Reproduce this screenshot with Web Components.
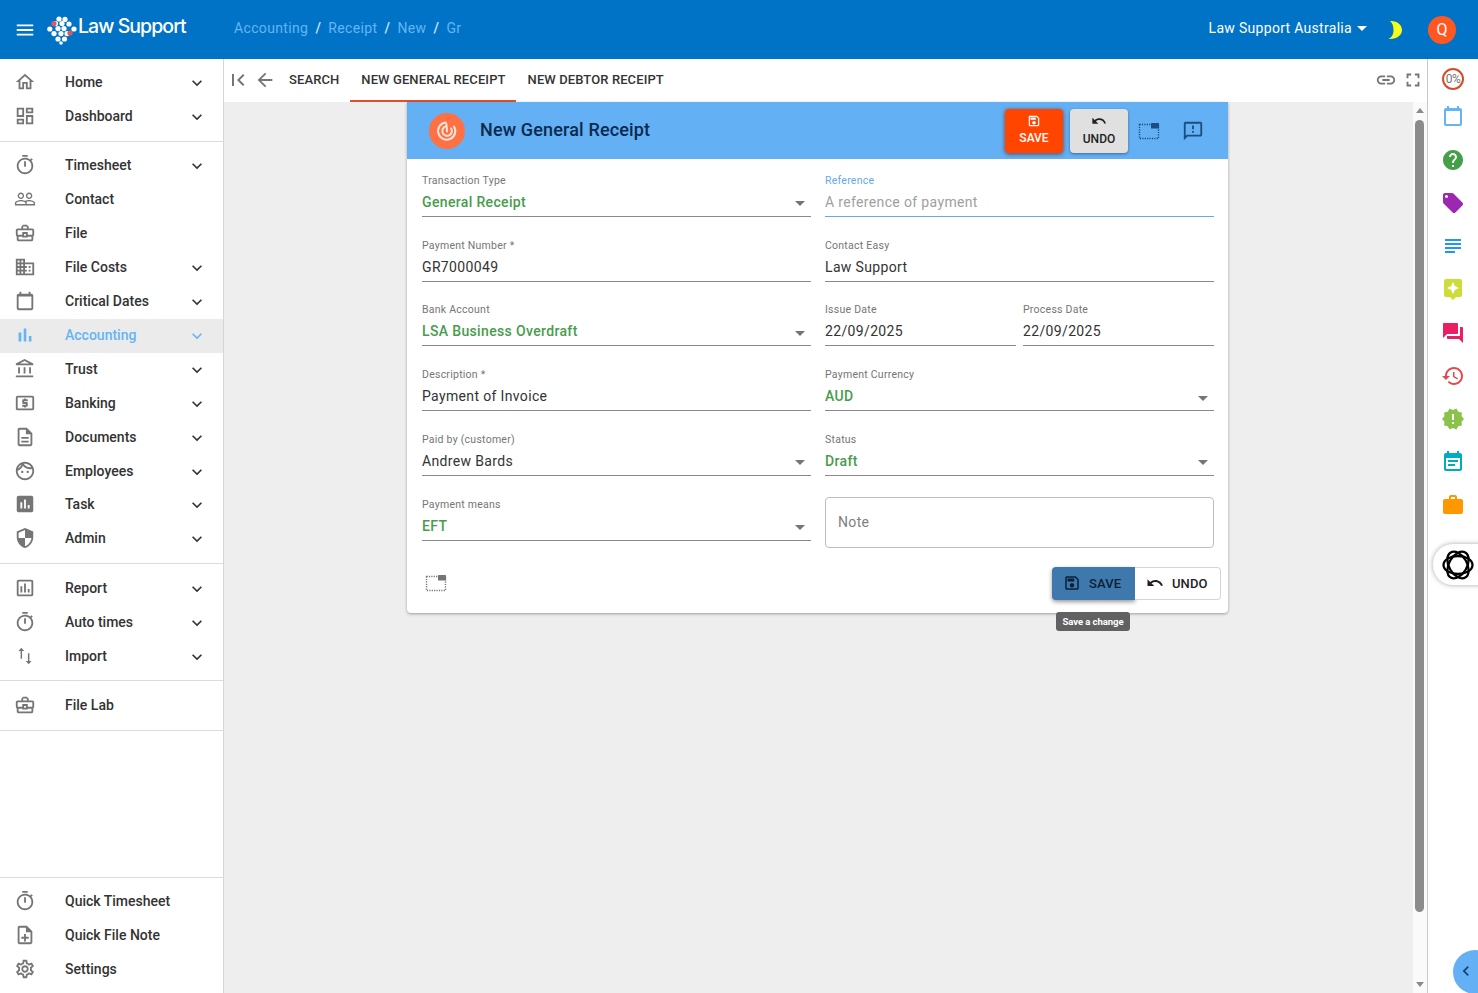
<!DOCTYPE html>
<html lang="en">
<head>
<meta charset="utf-8">
<title>New General Receipt</title>
<style>
  html,body{margin:0;height:100%;overflow:hidden}
  body{font-family:Roboto,"Liberation Sans",sans-serif;background:#fff;color:#333}
  ls-shell{height:100vh}
</style>
</head>
<body>
<ls-shell>
  <ls-header slot="header"></ls-header>
  <ls-sidebar slot="side">
    <ls-nav-group>
      <ls-nav-item icon="home" more>Home</ls-nav-item>
      <ls-nav-item icon="dashboard" more>Dashboard</ls-nav-item>
    </ls-nav-group>
    <ls-nav-group>
      <ls-nav-item icon="timer" more>Timesheet</ls-nav-item>
      <ls-nav-item icon="people">Contact</ls-nav-item>
      <ls-nav-item icon="bag">File</ls-nav-item>
      <ls-nav-item icon="domain" more>File Costs</ls-nav-item>
      <ls-nav-item icon="calendar" more>Critical Dates</ls-nav-item>
      <ls-nav-item icon="bars" more active>Accounting</ls-nav-item>
      <ls-nav-item icon="bank" more>Trust</ls-nav-item>
      <ls-nav-item icon="atm" more>Banking</ls-nav-item>
      <ls-nav-item icon="doc" more>Documents</ls-nav-item>
      <ls-nav-item icon="face" more>Employees</ls-nav-item>
      <ls-nav-item icon="assess" more style="margin-top:-1px">Task</ls-nav-item>
      <ls-nav-item icon="shield" more>Admin</ls-nav-item>
    </ls-nav-group>
    <ls-nav-group loose>
      <ls-nav-item icon="assessout" more>Report</ls-nav-item>
      <ls-nav-item icon="timer" more>Auto times</ls-nav-item>
      <ls-nav-item icon="swap" more>Import</ls-nav-item>
    </ls-nav-group>
    <ls-nav-group loose style="padding-bottom:8px">
      <ls-nav-item icon="bag">File Lab</ls-nav-item>
    </ls-nav-group>
    <div style="flex:1"></div>
    <ls-nav-group foot>
      <ls-nav-item icon="timer">Quick Timesheet</ls-nav-item>
      <ls-nav-item icon="noteadd">Quick File Note</ls-nav-item>
      <ls-nav-item icon="gear">Settings</ls-nav-item>
    </ls-nav-group>
  </ls-sidebar>
  <ls-tabs slot="tabs"></ls-tabs>
  <ls-receipt-card slot="content" title-text="New General Receipt">
    <ls-field label="Transaction Type" select green>General Receipt</ls-field>
    <ls-field label="Reference" focus placeholder>A reference of payment</ls-field>
    <ls-field label="Payment Number *">GR7000049</ls-field>
    <ls-field label="Contact Easy">Law Support</ls-field>
    <ls-field label="Bank Account" select green>LSA Business Overdraft</ls-field>
    <ls-split>
      <ls-field label="Issue Date">22/09/2025</ls-field>
      <ls-field label="Process Date">22/09/2025</ls-field>
    </ls-split>
    <ls-field label="Description *">Payment of Invoice</ls-field>
    <ls-field label="Payment Currency" select green>AUD</ls-field>
    <ls-field label="Paid by (customer)" select>Andrew Bards</ls-field>
    <ls-field label="Status" select green>Draft</ls-field>
    <ls-field label="Payment means" select green>EFT</ls-field>
    <ls-note>Note</ls-note>
  </ls-receipt-card>
  <ls-scrollbar slot="scroll"></ls-scrollbar>
  <ls-rail slot="rail"></ls-rail>
</ls-shell>

<script>
const P={
menu:'M3 18h18v-2H3v2zm0-5h18v-2H3v2zm0-7v2h18V6H3z',
home:'M12 5.69l5 4.5V18h-2v-6H9v6H7v-7.81l5-4.5M12 3L2 12h3v8h6v-6h2v6h6v-8h3L12 3z',
dashboard:'M19 5v2h-4V5h4M9 5v6H5V5h4m10 8v6h-4v-6h4M9 17v2H5v-2h4M21 3h-8v6h8V3zM11 3H3v10h8V3zm10 8h-8v10h8V11zm-10 4H3v6h8v-6z',
timer:'M15 1H9v2h6V1zm-4 13h2V8h-2v6zm8.03-6.61l1.42-1.42c-.43-.51-.9-.99-1.41-1.41l-1.42 1.42C16.07 4.74 14.12 4 12 4c-4.97 0-9 4.03-9 9s4.02 9 9 9 9-4.03 9-9c0-2.12-.74-4.07-1.97-5.61zM12 20c-3.87 0-7-3.13-7-7s3.13-7 7-7 7 3.13 7 7-3.13 7-7 7z',
people:'M16.5 13c-1.2 0-3.07.34-4.5 1-1.43-.67-3.3-1-4.5-1C5.33 13 1 14.08 1 16.25V19h22v-2.75c0-2.17-4.33-3.25-6.5-3.25zm-4 4.5h-10v-1.25c0-.54 2.56-1.75 5-1.75s5 1.21 5 1.75v1.25zm9 0H14v-1.25c0-.46-.2-.86-.52-1.22.88-.3 1.96-.53 3.02-.53 2.44 0 5 1.21 5 1.75v1.25zM7.5 12c1.93 0 3.5-1.57 3.5-3.5S9.43 5 7.5 5 4 6.57 4 8.5 5.57 12 7.5 12zm0-5.5c1.1 0 2 .9 2 2s-.9 2-2 2-2-.9-2-2 .9-2 2-2zm9 5.5c1.93 0 3.5-1.57 3.5-3.5S18.43 5 16.5 5 13 6.57 13 8.5s1.57 3.5 3.5 3.5zm0-5.5c1.1 0 2 .9 2 2s-.9 2-2 2-2-.9-2-2 .9-2 2-2z',
bag:'M20 7h-4V5l-2-2h-4L8 5v2H4c-1.1 0-2 .9-2 2v5c0 .75.4 1.38 1 1.73V19c0 1.11.89 2 2 2h14c1.11 0 2-.89 2-2v-3.28c.59-.35 1-.99 1-1.72V9c0-1.1-.9-2-2-2zM10 5h4v2h-4V5zM4 9h16v5h-5v-3H9v3H4V9zm9 6h-2v-2h2v2zm6 4H5v-3h4v1h6v-1h4v3z',
domain:'M12 7V3H2v18h20V7H12zM6 19H4v-2h2v2zm0-4H4v-2h2v2zm0-4H4V9h2v2zm0-4H4V5h2v2zm4 12H8v-2h2v2zm0-4H8v-2h2v2zm0-4H8V9h2v2zm0-4H8V5h2v2zm10 12h-8v-2h2v-2h-2v-2h2v-2h-2V9h8v10zm-2-8h-2v2h2v-2zm0 4h-2v2h2v-2z',
calendar:'M19 4h-1V2h-2v2H8V2H6v2H5c-1.1 0-2 .9-2 2v14c0 1.1.9 2 2 2h14c1.1 0 2-.9 2-2V6c0-1.1-.9-2-2-2zm0 16H5V7h14v13z',
bars:'M5 9.2h3V19H5zM10.6 5h2.8v14h-2.8zm5.6 8H19v6h-2.8z',
bank:'M6.5 10h-2v7h2v-7zm6 0h-2v7h2v-7zm8.5 9H2v2h19v-2zm-2.5-9h-2v7h2v-7zm-7-6.74L16.71 6H6.29l5.21-2.74m0-2.26L2 6v2h19V6l-9.5-5z',
atm:'M11 17h2v-1h1c.55 0 1-.45 1-1v-3c0-.55-.45-1-1-1h-3v-1h4V8h-2V7h-2v1h-1c-.55 0-1 .45-1 1v3c0 .55.45 1 1 1h3v1H9v2h2v1zm9-13H4c-1.11 0-1.99.89-1.99 2L2 18c0 1.11.89 2 2 2h16c1.11 0 2-.89 2-2V6c0-1.11-.89-2-2-2zm0 14H4V6h16v12z',
doc:'M8 16h8v2H8zm0-4h8v2H8zm6-10H6c-1.1 0-2 .9-2 2v16c0 1.1.89 2 1.99 2H18c1.1 0 2-.9 2-2V8l-6-6zm4 18H6V4h7v5h5v11z',
face:'M10.25 13c0 .69-.56 1.25-1.25 1.25S7.75 13.69 7.75 13s.56-1.25 1.25-1.25 1.25.56 1.25 1.25zM15 11.75c-.69 0-1.25.56-1.25 1.25s.56 1.25 1.25 1.25 1.25-.56 1.25-1.25-.56-1.25-1.25-1.25zm7 .25c0 5.52-4.48 10-10 10S2 17.52 2 12 6.48 2 12 2s10 4.48 10 10zM10.66 4.12C12.06 6.44 14.6 8 17.5 8c.46 0 .91-.05 1.34-.12C17.44 5.56 14.9 4 12 4c-.46 0-.91.05-1.34.12zM4.42 9.47c1.71-.97 3.03-2.55 3.66-4.44C6.37 6 5.05 7.58 4.42 9.47zM20 12c0-.78-.12-1.53-.33-2.24-.7.15-1.42.24-2.17.24-3.13 0-5.92-1.44-7.76-3.69C8.69 8.87 6.6 10.88 4 11.86c.01.04 0 .09 0 .14 0 4.41 3.59 8 8 8s8-3.59 8-8z',
assess:'M19 3H5c-1.1 0-2 .9-2 2v14c0 1.1.9 2 2 2h14c1.1 0 2-.9 2-2V5c0-1.1-.9-2-2-2zM9 17H7v-7h2v7zm4 0h-2V7h2v10zm4 0h-2v-4h2v4z',
assessout:'M19 3H5c-1.1 0-2 .9-2 2v14c0 1.1.9 2 2 2h14c1.1 0 2-.9 2-2V5c0-1.1-.9-2-2-2zm0 16H5V5h14v14zM7 10h2v7H7zm4-3h2v10h-2zm4 6h2v4h-2z',
shield:'M12 1L3 5v6c0 5.55 3.84 10.74 9 12 5.16-1.26 9-6.45 9-12V5l-9-4zm0 10.99h7c-.53 4.12-3.28 7.79-7 8.94V12H5V6.3l7-3.11v8.8z',
swap:'M8 3L4.8 6.6h2.4V15h1.6V6.6h2.4L8 3zm8 18l3.2-3.6h-2.4V9h-1.6v8.4h-2.4L16 21z',
noteadd:'M14 2H6c-1.1 0-1.99.9-1.99 2L4 20c0 1.1.89 2 1.99 2H18c1.1 0 2-.9 2-2V8l-6-6zm4 18H6V4h7v5h5v11zM13 11h-2v3H8v2h3v3h2v-3h3v-2h-3z',
gear:'M19.43 12.98c.04-.32.07-.64.07-.98 0-.34-.03-.66-.07-.98l2.11-1.65c.19-.15.24-.42.12-.64l-2-3.46c-.09-.16-.26-.25-.44-.25-.06 0-.12.01-.17.03l-2.49 1c-.52-.4-1.08-.73-1.69-.98l-.38-2.65C14.46 2.18 14.25 2 14 2h-4c-.25 0-.46.18-.49.42l-.38 2.65c-.61.25-1.17.59-1.69.98l-2.49-1c-.06-.02-.12-.03-.18-.03-.17 0-.34.09-.43.25l-2 3.46c-.13.22-.07.49.12.64l2.11 1.65c-.04.32-.07.65-.07.98 0 .33.03.66.07.98l-2.11 1.65c-.19.15-.24.42-.12.64l2 3.46c.09.16.26.25.44.25.06 0 .12-.01.17-.03l2.49-1c.52.4 1.08.73 1.69.98l.38 2.65c.03.24.24.42.49.42h4c.25 0 .46-.18.49-.42l.38-2.65c.61-.25 1.17-.59 1.69-.98l2.49 1c.06.02.12.03.18.03.17 0 .34-.09.43-.25l2-3.46c.12-.22.07-.49-.12-.64l-2.11-1.65zm-1.98-1.71c.04.31.05.52.05.73 0 .21-.02.43-.05.73l-.14 1.13.89.7 1.08.84-.7 1.21-1.27-.51-1.04-.42-.9.68c-.43.32-.84.56-1.25.73l-1.06.43-.16 1.13-.2 1.35h-1.4l-.19-1.35-.16-1.13-1.06-.43c-.43-.18-.83-.41-1.23-.71l-.91-.7-1.06.43-1.27.51-.7-1.21 1.08-.84.89-.7-.14-1.13c-.03-.31-.05-.54-.05-.74s.02-.43.05-.73l.14-1.13-.89-.7-1.08-.84.7-1.21 1.27.51 1.04.42.9-.68c.43-.32.84-.56 1.25-.73l1.06-.43.16-1.13.2-1.35h1.39l.19 1.35.16 1.13 1.06.43c.43.18.83.41 1.23.71l.91.7 1.06-.43 1.27-.51.7 1.21-1.07.85-.89.7.14 1.13zM12 8c-2.21 0-4 1.79-4 4s1.79 4 4 4 4-1.79 4-4-1.79-4-4-4zm0 6c-1.1 0-2-.9-2-2s.9-2 2-2 2 .9 2 2-.9 2-2 2z',
chev:'M16.59 8.59L12 13.17 7.41 8.59 6 10l6 6 6-6z',
first:'M18.41 16.59L13.82 12l4.59-4.59L17 6l-6 6 6 6zM6 6h2v12H6z',
back:'M20 11H7.83l5.59-5.59L12 4l-8 8 8 8 1.41-1.41L7.83 13H20v-2z',
link:'M3.9 12c0-1.71 1.39-3.1 3.1-3.1h4V7H7c-2.76 0-5 2.24-5 5s2.24 5 5 5h4v-1.9H7c-1.71 0-3.1-1.39-3.1-3.1zM8 13h8v-2H8v2zm9-6h-4v1.9h4c1.71 0 3.1 1.39 3.1 3.1s-1.39 3.1-3.1 3.1h-4V17h4c2.76 0 5-2.24 5-5s-2.24-5-5-5z',
full:'M7 14H5v5h5v-2H7v-3zm-2-4h2V7h3V5H5v5zm12 7h-3v2h5v-5h-2v3zM14 5v2h3v3h2V5h-5z',
save:'M17 3H5c-1.11 0-2 .9-2 2v14c0 1.1.89 2 2 2h14c1.1 0 2-.9 2-2V7l-4-4zm2 16H5V5h11.17L19 7.83V19zm-7-7c-1.66 0-3 1.34-3 3s1.34 3 3 3 3-1.34 3-3-1.34-3-3-3zM6 6h9v4H6z',
undo:'M12.5 8c-2.65 0-5.05.99-6.9 2.6L2 7v9h9l-3.62-3.62c1.39-1.16 3.16-1.88 5.12-1.88 3.54 0 6.55 2.31 7.6 5.5l2.37-.78C21.08 11.03 17.15 8 12.5 8z',
announce:'M20 2H4c-1.1 0-1.99.9-1.99 2L2 22l4-4h14c1.1 0 2-.9 2-2V4c0-1.1-.9-2-2-2zm0 14H5.17L4 17.17V4h16v12zM11 12h2v2h-2zm0-6h2v4h-2z',
help:'M12 2C6.48 2 2 6.48 2 12s4.48 10 10 10 10-4.48 10-10S17.52 2 12 2zm1 17h-2v-2h2v2zm2.07-7.75l-.9.92C13.45 12.9 13 13.5 13 15h-2v-.5c0-1.1.45-2.1 1.17-2.83l1.24-1.26c.37-.36.59-.86.59-1.41 0-1.1-.9-2-2-2s-2 .9-2 2H8c0-2.21 1.79-4 4-4s4 1.79 4 4c0 .88-.36 1.68-.93 2.25z',
tag:'M21.41 11.58l-9-9C12.05 2.22 11.55 2 11 2H4c-1.1 0-2 .9-2 2v7c0 .55.22 1.05.59 1.42l9 9c.36.36.86.58 1.41.58.55 0 1.05-.22 1.41-.59l7-7c.37-.36.59-.86.59-1.41 0-.55-.23-1.06-.59-1.42zM5.5 7C4.67 7 4 6.33 4 5.5S4.67 4 5.5 4 7 4.67 7 5.5 6.33 7 5.5 7z',
subject:'M14 17H4v2h10v-2zm6-8H4v2h16V9zM4 15h16v-2H4v2zM4 5v2h16V5H4z',
star:'M19 2H5c-1.1 0-2 .9-2 2v14c0 1.1.9 2 2 2h4l3 3 3-3h4c1.1 0 2-.9 2-2V4c0-1.1-.9-2-2-2zm-5.12 10.88L12 17l-1.88-4.12L6 11l4.12-1.88L12 5l1.88 4.12L18 11l-4.12 1.88z',
forum:'M21 6h-2v9H6v2c0 .55.45 1 1 1h11l4 4V7c0-.55-.45-1-1-1zm-4 6V3c0-.55-.45-1-1-1H3c-.55 0-1 .45-1 1v14l4-4h10c.55 0 1-.45 1-1z',
history:'M13 3c-4.97 0-9 4.03-9 9H1l3.89 3.89.07.14L9 12H6c0-3.87 3.13-7 7-7s7 3.13 7 7-3.13 7-7 7c-1.93 0-3.68-.79-4.94-2.06l-1.42 1.42C8.27 19.99 10.51 21 13 21c4.97 0 9-4.03 9-9s-4.03-9-9-9zm-1 5v5l4.28 2.54.72-1.21-3.5-2.08V8H12z',
release:'M23 12l-2.44-2.78.34-3.68-3.61-.82-1.89-3.18L12 3 8.6 1.54 6.71 4.72l-3.61.81.34 3.68L1 12l2.44 2.78-.34 3.69 3.61.82 1.89 3.18L12 21l3.4 1.46 1.89-3.18 3.61-.82-.34-3.68L23 12zm-10 5h-2v-2h2v2zm0-4h-2V7h2v6z',
event:'M17 10H7v2h10v-2zm2-7h-1V1h-2v2H8V1H6v2H5c-1.11 0-1.99.9-1.99 2L3 19c0 1.1.89 2 2 2h14c1.1 0 2-.9 2-2V5c0-1.1-.9-2-2-2zm0 16H5V8h14v11zm-5-5H7v2h7v-2z',
work:'M20 6h-4V4c0-1.11-.89-2-2-2h-4c-1.11 0-2 .89-2 2v2H4c-1.11 0-1.99.89-1.99 2L2 19c0 1.11.89 2 2 2h16c1.11 0 2-.89 2-2V8c0-1.11-.89-2-2-2zm-6 0h-4V4h4v2z',
left:'M15.41 7.41L14 6l-6 6 6 6 1.41-1.41L10.83 12z',
moon:'M7 3C14 2.5 19 7 19 12S14 21.5 5.5 21C9 19.5 10.5 16 10.5 12S9.5 5 7 3z'
};
const def=(n,html)=>{
  customElements.define(n,class extends HTMLElement{
    constructor(){super();this.attachShadow({mode:'open'});if(typeof html!=='function')this.shadowRoot.innerHTML=html;}
    connectedCallback(){if(typeof html==='function'&&!this._r){this._r=1;this.shadowRoot.innerHTML=html(this);}}
  });
};
def('ls-icon',el=>{
  const n=el.getAttribute('name')||'menu',s=el.getAttribute('size')||24;
  return `<style>:host{display:inline-flex;flex:none;width:${s}px;height:${s}px}svg{display:block;width:100%;height:100%;fill:currentColor}</style><svg viewBox="0 0 24 24" aria-hidden="true"><path d="${P[n]||''}"/></svg>`;
});
def('ls-pip',el=>{
  const s=el.getAttribute('size')||24;
  return `<style>:host{display:inline-flex;flex:none;width:${s}px;height:${s}px}svg{display:block;width:100%;height:100%}</style>
  <svg viewBox="0 0 24 24" aria-hidden="true"><rect x="2.5" y="5.5" width="19" height="14" fill="none" stroke="currentColor" stroke-width="1.4" stroke-dasharray="1.2 1.2"/><rect x="14" y="4" width="8" height="5.5" rx=".5" fill="currentColor"/></svg>`;
});

def('ls-shell',`<style>
:host{display:grid;grid-template-columns:224px 1fr 14px 51px;grid-template-rows:59px 43px 1fr;position:relative;overflow:hidden;background:#fff}
.h{grid-column:1/-1;grid-row:1}.s{grid-column:1;grid-row:2/4;display:flex;min-height:0}
.t{grid-column:2/4;grid-row:2;min-width:0}.c{grid-column:2;grid-row:3;min-height:0;min-width:0;background:#eee}
.b{grid-column:3;grid-row:3;min-height:0}.r{grid-column:4;grid-row:2/4;min-height:0}
</style>
<div class="h"><slot name="header"></slot></div>
<div class="s"><slot name="side"></slot></div>
<div class="t"><slot name="tabs"></slot></div>
<div class="c"><slot name="content"></slot></div>
<div class="b"><slot name="scroll"></slot></div>
<div class="r"><slot name="rail"></slot></div>`);

def('ls-header',`<style>
:host{display:flex;align-items:center;height:59px;background:#0073c6;color:#fff;font:400 14px Roboto,sans-serif;box-sizing:border-box}
.burger{margin-left:14px;margin-top:1px}
.logo{display:flex;align-items:center;margin-left:11px;width:30px;height:30px;margin-top:1px}
.brand{font:500 19.5px Inter,"Open Sans",sans-serif;letter-spacing:-.95px;margin-left:1px;margin-top:-7px;width:108px;white-space:nowrap}
.crumbs{display:flex;margin-left:48px;margin-top:-3px;color:#64b5f6;letter-spacing:.35px;line-height:20px}
.crumbs i{font-style:normal;color:#cfe6fa;margin:0 7.1px;font-weight:500}
.sp{flex:1}
.org{display:flex;align-items:center;margin-top:-3px;letter-spacing:.3px}
.caret{width:0;height:0;border:5px solid transparent;border-top-color:#fff;border-bottom:0;margin-left:5px;margin-top:1px}
.moon{color:#f5ff1a;margin:0 21px 0 16px}
.av{width:28px;height:28px;border-radius:50%;background:#ff5722;display:flex;align-items:center;justify-content:center;font-size:16px;margin-right:22px;color:#fff}
</style>
<ls-icon class="burger" name="menu" size="22"></ls-icon>
<svg class="logo" viewBox="0 0 30 30" aria-hidden="true"><g fill="#fff"><circle cx="12" cy="4" r="2.6"/><circle cx="18" cy="4.4" r="2.6"/><circle cx="8.5" cy="8.6" r="2.6"/><circle cx="15" cy="8.6" r="2.6"/><circle cx="22" cy="9" r="2.6"/><circle cx="2.8" cy="14" r="2.6"/><circle cx="11" cy="13.6" r="2.6"/><circle cx="17" cy="13.6" r="2.6"/><circle cx="27" cy="14" r="2.6"/><circle cx="7" cy="18.6" r="2.6"/><circle cx="14" cy="18.6" r="2.6"/><circle cx="20" cy="18.6" r="2.6"/><circle cx="11" cy="24" r="2.6"/><circle cx="17.5" cy="24" r="2.6"/><circle cx="14" cy="28" r="1.8"/></g><circle cx="7" cy="8.6" r="2.6" fill="#d95a67"/><circle cx="23" cy="18" r="2.6" fill="#d95a67"/></svg>
<div class="brand">Law Support</div>
<div class="crumbs"><span>Accounting</span><i>/</i><span>Receipt</span><i>/</i><span>New</span><i>/</i><span>Gr</span></div>
<div class="sp"></div>
<div class="org"><span>Law Support Australia</span><span class="caret"></span></div>
<ls-icon class="moon" name="moon"></ls-icon>
<div class="av">Q</div>`);

def('ls-sidebar',`<style>
:host{display:flex;flex-direction:column;width:224px;box-sizing:border-box;border-right:1px solid #d6d6d6;background:#fff;height:100%}
</style><slot></slot>`);

def('ls-nav-group',`<style>
:host{display:block;padding:6px 0 8px;border-bottom:1px solid #dcdcdc}
:host([loose]){padding:7px 0}
:host([foot]){border-bottom:0;border-top:1px solid #dcdcdc;padding:6px 0 7px}
</style><slot></slot>`);

def('ls-nav-item',el=>{
  const more=el.hasAttribute('more'),a=el.hasAttribute('active');
  return `<style>
:host{display:flex;align-items:center;height:34px;font:500 14px/20px Roboto,sans-serif;color:${a?'#64b5f6':'#333'};${a?'background:linear-gradient(transparent 1px,#ebebeb 1px);box-shadow:0 1px #ebebeb;position:relative;':''}}
.i{margin-left:14px;color:${a?'#64b5f6':'#757575'}}
.t{margin-left:29px;flex:1;white-space:nowrap}
.c{margin-right:16px;margin-top:1px;color:${a?'#64b5f6':'#333'}}
</style><ls-icon class="i" name="${el.getAttribute('icon')}" size="22"></ls-icon><span class="t"><slot></slot></span>${more?'<ls-icon class="c" name="chev" size="20"></ls-icon>':''}`;
});

def('ls-tabs',`<style>
:host{display:flex;align-items:center;height:43px;background:#fff;font:500 13px Roboto,sans-serif;color:#333;box-sizing:border-box}
.g{color:#757575;margin-bottom:2px}
.a{margin-left:2px}.b{margin-left:4px}
.tab{display:flex;align-items:center;height:43px;box-sizing:border-box;padding:0 11px;letter-spacing:.1px;white-space:nowrap;border-bottom:2px solid transparent}
.tab.on{border-bottom-color:#e2502b;padding-right:10px}
.tab.on + .tab{padding-left:12px}
.first{margin-left:2px}
.sp{flex:1}
.end{display:flex;align-items:center;gap:6px;margin:0 3px 2px 0;color:#757575}
.end ls-icon:first-child{margin-right:-1px}
</style>
<ls-icon class="g a" name="first" size="24"></ls-icon>
<ls-icon class="g b" name="back" size="22"></ls-icon>
<div class="tab first">SEARCH</div>
<div class="tab on">NEW GENERAL RECEIPT</div>
<div class="tab">NEW DEBTOR RECEIPT</div>
<div class="sp"></div>
<div class="end"><ls-icon name="link" size="22"></ls-icon><ls-icon name="full" size="22"></ls-icon></div>`);

def('ls-receipt-card',el=>`<style>
:host{display:block;width:821px;margin:0 auto;position:relative;left:-1px;background:#fff;border-radius:0 0 4px 4px;box-shadow:0 1px 3px rgba(0,0,0,.35);font-family:Roboto,sans-serif}
.bar{display:flex;align-items:center;height:57px;background:#64b0f5;color:#0b2a4e;box-sizing:border-box}
.badge{width:36px;height:36px;margin-left:22px;display:block}
h1{font:500 18px Roboto,sans-serif;margin:-2px 0 0 15px;flex:1;letter-spacing:.15px;color:#0b2a4e}
.tb{display:flex;flex-direction:column;align-items:center;justify-content:center;width:58px;height:44px;box-sizing:border-box;padding-bottom:3px;border-radius:4px;font:500 12px/14px Roboto,sans-serif;margin-right:7px;box-shadow:0 1px 3px rgba(0,0,0,.4);gap:3px}
.tb.s{background:#ff4500;color:#fff;box-shadow:0 1px 4px rgba(90,20,0,.7)}.tb.u{background:#e0e0e0;color:#222}
.ic{color:#1a4d80;display:flex}
.ic.one{margin-left:2px}.ic.two{margin-left:21px;margin-right:24px}
.form{display:grid;grid-template-columns:389px 389px;column-gap:14px;row-gap:20.8px;padding:14.8px 14px 0 15px;grid-auto-rows:44px}
.foot{display:flex;align-items:center;padding:12px 7px 13px 17px;margin-top:13.2px;height:33px;box-sizing:content-box;position:relative}
.foot .sp{flex:1}
.pipf{color:#757575;display:flex}
button{font:500 13px Roboto,sans-serif;letter-spacing:.1px;height:33px;border:0;display:flex;align-items:center;box-sizing:border-box;padding:0;cursor:pointer;gap:8px}
.save{width:83px;padding-left:11px;background:#3f78ac;color:#0b2036;border-radius:4px 0 0 4px;box-shadow:0 2px 4px rgba(0,0,0,.4)}
.undo{width:86px;padding-left:11px;background:#fff;color:#222;border:1px solid #d5d5d5;border-left:0;border-radius:0 4px 4px 0}
.tip{position:absolute;left:649px;top:57px;height:19px;width:74px;background:#616161;color:#fff;border-radius:3px;font:700 9.6px/19px Roboto,sans-serif;text-align:center;white-space:nowrap;letter-spacing:-.1px}
</style>
<div class="bar">
<svg class="badge" viewBox="0 0 36 36" aria-hidden="true"><circle cx="18" cy="18" r="18" fill="#ff7043"/><g fill="none" stroke="#ffe6dc" stroke-linecap="round" stroke-width="2"><path d="M25 13.5a8.6 8.6 0 1 1-8.4-4"/><path d="M22.2 15.5a4.8 4.8 0 1 1-5-2.2"/><path d="M18 18.5l-.6-7.5"/></g></svg>
<h1>${el.getAttribute('title-text')||''}</h1>
<div class="tb s"><ls-icon name="save" size="14"></ls-icon><span>SAVE</span></div>
<div class="tb u"><ls-icon name="undo" size="16"></ls-icon><span>UNDO</span></div>
<span class="ic one"><ls-pip size="24"></ls-pip></span>
<span class="ic two"><ls-icon name="announce" size="22"></ls-icon></span>
</div>
<div class="form"><slot></slot></div>
<div class="foot"><span class="pipf"><ls-pip size="24"></ls-pip></span><span class="sp"></span>
<button class="save"><ls-icon name="save" size="18"></ls-icon>SAVE</button><button class="undo"><ls-icon name="undo" size="18"></ls-icon>UNDO</button>
<div class="tip">Save a change</div></div>`);

def('ls-field',el=>{
  const sel=el.hasAttribute('select'),g=el.hasAttribute('green'),f=el.hasAttribute('focus'),ph=el.hasAttribute('placeholder');
  return `<style>
:host{display:flex;flex-direction:column;min-width:0;height:44px;box-sizing:border-box;font-family:Roboto,sans-serif}
label{font:400 10.5px/14px Roboto,sans-serif;color:${f?'#64a9e8':'#757575'};letter-spacing:.25px;white-space:nowrap}
.box{display:flex;align-items:center;height:24px;margin-top:4px;border-bottom:1px solid ${f?'#64a9e8':'#8a8a8a'}}
.v{flex:1;font:${g?500:400} 14px/20px Roboto,sans-serif;letter-spacing:.35px;color:${ph?'#a0a0a0':g?'#479c4c':'#333'};white-space:nowrap;padding-bottom:4px}
.a{width:0;height:0;border:5px solid transparent;border-top-color:#757575;border-bottom:0;margin-right:6px}
</style><label>${el.getAttribute('label')}</label><div class="box"><span class="v"><slot></slot></span>${sel?'<span class="a"></span>':''}</div>`;
});
def('ls-split',`<style>:host{display:grid;grid-template-columns:191px 191px;column-gap:7px}</style><slot></slot>`);
def('ls-note',`<style>:host{display:flex;align-items:center;box-sizing:border-box;height:51px;margin-top:-.8px;border:1px solid #bdbdbd;border-radius:4px;padding:0 12px;font:400 14px/20px Roboto,sans-serif;color:#808080;letter-spacing:.35px;background:#fff}</style><span><slot></slot></span>`);

def('ls-scrollbar',`<style>
:host{display:flex;flex-direction:column;align-items:center;height:100%;width:14px;background:#fafafa;box-sizing:border-box;padding-right:1px}
.u,.d{width:0;height:0;border:4.5px solid transparent;flex:none}
.u{border-bottom:5px solid #8a8a8a;border-top:0;margin-top:6px}
.t{width:9px;height:792px;background:#8b8b8b;border-radius:5px;margin-top:7px;flex:none}
.sp{flex:1}
.d{border-top:5px solid #8a8a8a;border-bottom:0;margin-bottom:6px}
</style><div class="u"></div><div class="t"></div><div class="sp"></div><div class="d"></div>`);

def('ls-rail',`<style>
:host{display:block;position:relative;height:100%;border-left:1px solid #c9c9c9;background:#fff;box-sizing:border-box;width:51px;padding-top:9px}
.pct{width:18px;height:18px;border:2px solid #d8492c;border-radius:50%;margin:0 0 5px 14px;font:400 12px/18px Roboto,sans-serif;color:#757575;text-align:center;letter-spacing:-.4px;white-space:nowrap}
.col{display:flex;flex-direction:column;align-items:center;width:50px}
.it{display:flex;align-items:center;justify-content:center;height:43.2px;width:50px}
.pill{position:absolute;left:5px;top:485px;width:60px;height:41px;border-radius:20px 0 0 20px;background:#fff;box-shadow:0 0 5px rgba(0,0,0,.35);display:flex;align-items:center;padding-left:9px;box-sizing:border-box}
.fab{position:absolute;left:25px;top:891px;width:44px;height:44px;border-radius:50%;background:#64b0f5;color:#123f6d}
.fab ls-icon{position:absolute;left:3px;top:11px}
</style>
<div class="pct">0%</div>
<div class="col">
<div class="it" style="color:#64b5f6"><ls-icon name="calendar" style="margin-top:-1px"></ls-icon></div>
<div class="it" style="color:#43a047"><ls-icon name="help"></ls-icon></div>
<div class="it" style="color:#9c27b0"><ls-icon name="tag"></ls-icon></div>
<div class="it" style="color:#2196f3"><ls-icon name="subject"></ls-icon></div>
<div class="it" style="color:#cddc39"><ls-icon name="star"></ls-icon></div>
<div class="it" style="color:#e91e63"><ls-icon name="forum"></ls-icon></div>
<div class="it" style="color:#e5484f"><ls-icon name="history"></ls-icon></div>
<div class="it" style="color:#8bc34a"><ls-icon name="release"></ls-icon></div>
<div class="it" style="color:#00acc1"><ls-icon name="event"></ls-icon></div>
<div class="it" style="color:#ff9800"><ls-icon name="work"></ls-icon></div>
</div>
<div class="pill"><svg width="32" height="32" viewBox="-16 -16 32 32" aria-hidden="true" fill="none" stroke="#000" stroke-width="2.3"><ellipse rx="14.5" ry="9"/><ellipse rx="14.5" ry="9" transform="rotate(60)"/><ellipse rx="14.5" ry="9" transform="rotate(120)"/></svg></div>
<div class="fab"><ls-icon name="left" size="20"></ls-icon></div>`);
</script>
</body>
</html>
